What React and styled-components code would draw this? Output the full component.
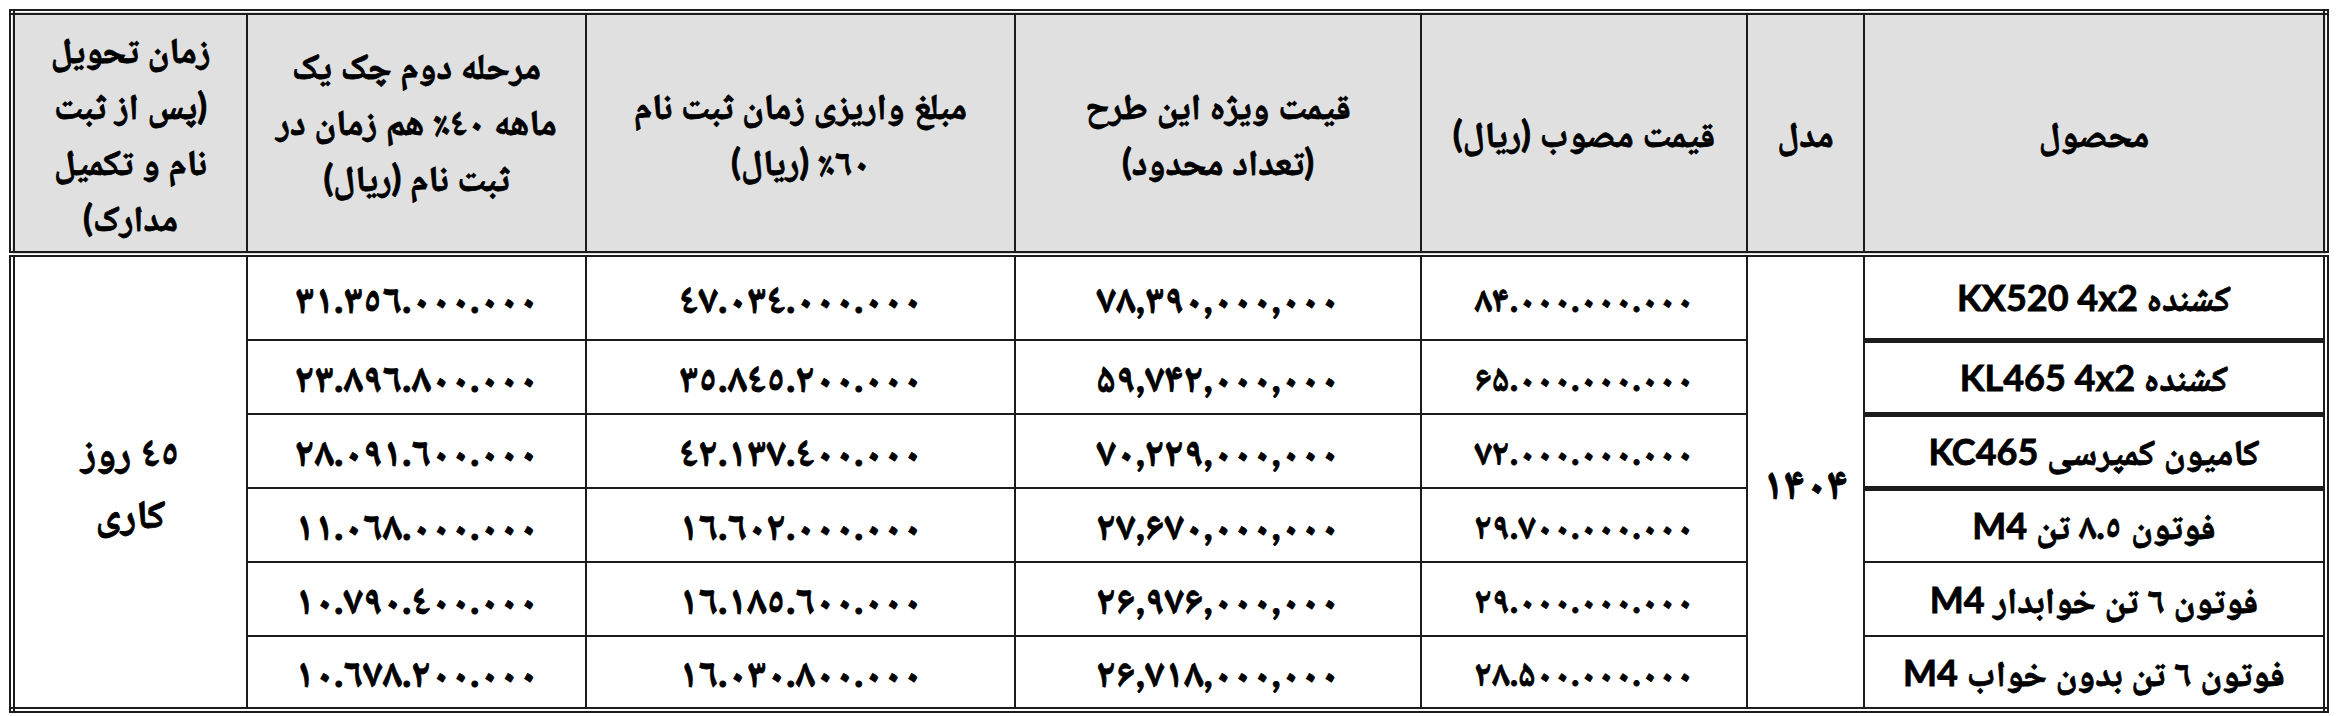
import React from "react"
import styled, { createGlobalStyle } from "styled-components"

const GlobalStyle = createGlobalStyle`
html, body {
    margin: 0;
    padding: 0;
    background: #fff;
}
body {
    font-family: Lato, "Noto Naskh Arabic", "Noto Sans Arabic", "DejaVu Sans", sans-serif;
    color: #000;
}
`

const Page = styled.div`
padding: 9px 9px 0 9px;
`

const Table = styled.table`
direction: rtl;
width: 2318px;
border-collapse: collapse;
table-layout: fixed;
border: 6px double #1c1c1c;
font-weight: 700;
-webkit-text-stroke: 0.8px #000;
`

const Head = styled.th`
height: 236px;
background: #e0e0e0;
border: 2px solid #1c1c1c;
border-bottom: 6px double #1c1c1c;
font-size: 36px;
font-weight: 700;
text-align: center;
vertical-align: middle;
padding: 0 4px;
white-space: nowrap;
`

const HeadBody = styled.div`
padding-bottom: ${props => props.$lift ? "24px" : "0"};
`

const HeadLine = styled.div`
height: 56px;
line-height: 56px;
`

const Row = styled.tr`
height: ${props => props.$tall ? "86px" : "74px"};
`

const Cell = styled.td`
border: 2px solid #1c1c1c;
border-bottom-width: ${props => props.$heavy ? "5px" : "2px"};
font-size: ${props => props.$size || 40}px;
line-height: 1.3;
text-align: center;
vertical-align: middle;
padding: 0 8px;
white-space: nowrap;
`

const Span = styled.td`
border: 2px solid #1c1c1c;
font-size: ${props => props.$size || 40}px;
text-align: center;
vertical-align: middle;
`

const SpanLine = styled.div`
height: 62px;
line-height: 62px;
`

const heads = [
    { lines: ["محصول"] },
    { lines: ["مدل"] },
    { lines: ["قیمت مصوب (ریال)"] },
    { lines: ["قیمت ویژه این طرح", "(تعداد محدود)"] },
    { lines: ["مبلغ واریزی زمان ثبت نام", "٦٠٪ (ریال)"] },
    { lines: ["مرحله دوم چک یک", "ماهه ٤٠٪ هم زمان در", "ثبت نام (ریال)"], lift: true },
    { lines: ["زمان تحویل", "(پس از ثبت", "نام  و تکمیل", "مدارک)"] },
]

const widths = [462, 117, 326, 406, 429, 339, 235]

const rows = [
    { name: "کشنده KX520 4x2", base: "۸۴.۰۰۰.۰۰۰.۰۰۰", special: "۷۸,۳۹۰,۰۰۰,۰۰۰", first: "٤٧.٠٣٤.٠٠٠.٠٠٠", second: "٣١.٣٥٦.٠٠٠.٠٠٠" },
    { name: "کشنده KL465 4x2", base: "۶۵.۰۰۰.۰۰۰.۰۰۰", special: "۵۹,۷۴۲,۰۰۰,۰۰۰", first: "٣٥.٨٤٥.٢٠٠.٠٠٠", second: "٢٣.٨٩٦.٨٠٠.٠٠٠" },
    { name: "کامیون کمپرسی KC465", base: "۷۲.۰۰۰.۰۰۰.۰۰۰", special: "۷۰,۲۲۹,۰۰۰,۰۰۰", first: "٤٢.١٣٧.٤٠٠.٠٠٠", second: "٢٨.٠٩١.٦٠٠.٠٠٠" },
    { name: "فوتون ٨.٥ تن M4", base: "۲۹.۷۰۰.۰۰۰.۰۰۰", special: "۲۷,۶۷۰,۰۰۰,۰۰۰", first: "١٦.٦٠٢.٠٠٠.٠٠٠", second: "١١.٠٦٨.٠٠٠.٠٠٠" },
    { name: "فوتون ٦ تن خوابدار M4", base: "۲۹.۰۰۰.۰۰۰.۰۰۰", special: "۲۶,۹۷۶,۰۰۰,۰۰۰", first: "١٦.١٨٥.٦٠٠.٠٠٠", second: "١٠.٧٩٠.٤٠٠.٠٠٠" },
    { name: "فوتون ٦ تن بدون خواب M4", base: "۲۸.۵۰۰.۰۰۰.۰۰۰", special: "۲۶,۷۱۸,۰۰۰,۰۰۰", first: "١٦.٠٣٠.٨٠٠.٠٠٠", second: "١٠.٦٧٨.٢٠٠.٠٠٠" },
]

export default function App() {
    return (
        <Page>
            <GlobalStyle />
            <Table>
                <colgroup>
                    {widths.map((w, i) => <col key={i} style={{ width: w }} />)}
                </colgroup>
                <thead>
                    <tr>
                        {heads.map((h, i) => (
                            <Head key={i}>
                                <HeadBody $lift={h.lift}>
                                    {h.lines.map(l => <HeadLine key={l}>{l}</HeadLine>)}
                                </HeadBody>
                            </Head>
                        ))}
                    </tr>
                </thead>
                <tbody>
                    {rows.map((r, i) => (
                        <Row key={r.name} $tall={i === 0}>
                            <Cell $size={36} $heavy={i < 3}>{r.name}</Cell>
                            {i === 0 && (
                                <Span rowSpan={6} $size={44}>
                                    <SpanLine>۱۴۰۴</SpanLine>
                                </Span>
                            )}
                            <Cell $size={36}>{r.base}</Cell>
                            <Cell>{r.special}</Cell>
                            <Cell>{r.first}</Cell>
                            <Cell>{r.second}</Cell>
                            {i === 0 && (
                                <Span rowSpan={6}>
                                    <SpanLine>٤٥ روز</SpanLine>
                                    <SpanLine>کاری</SpanLine>
                                </Span>
                            )}
                        </Row>
                    ))}
                </tbody>
            </Table>
        </Page>
    )
}
